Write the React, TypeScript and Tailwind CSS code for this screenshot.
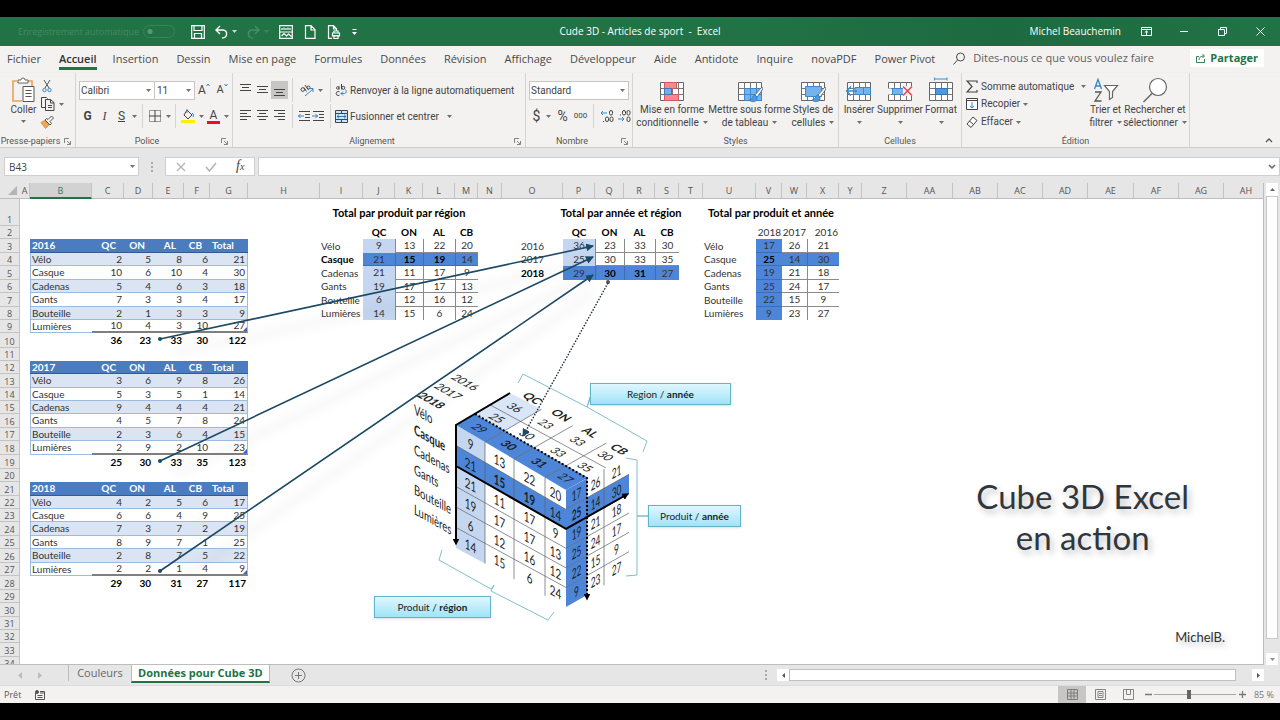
import React from 'react';

type Cell = { text?: string | number; cls?: string; span?: number; corner?: boolean };
type Pt = [number, number];

const COLUMNS: [string, number][] = [
    ['A', 10], ['B', 62], ['C', 32], ['D', 29], ['E', 31], ['F', 26], ['G', 38], ['H', 72], ['I', 43],
    ['J', 32], ['K', 28], ['L', 32], ['M', 23], ['N', 24], ['O', 61], ['P', 32], ['Q', 29], ['R', 31],
    ['S', 24], ['T', 24], ['U', 53], ['V', 26], ['W', 25], ['X', 32], ['Y', 23], ['Z', 45], ['AA', 46],
    ['AB', 45], ['AC', 45], ['AD', 45], ['AE', 46], ['AF', 45], ['AG', 45], ['AH', 0],
];

const ROWS = [
    27, 13, 14, 13, 14, 13, 14, 13, 13, 15, 13, 13, 14, 13, 13, 14, 13, 14, 14, 13, 14, 13, 13, 14, 13, 14,
    13, 14, 13, 14, 13, 13, 14, 13,
];

const PRODUCTS = ['Vélo', 'Casque', 'Cadenas', 'Gants', 'Bouteille', 'Lumières'];
const REGIONS = ['QC', 'ON', 'AL', 'CB'];

const YEARS = [
    {
        year: '2016',
        row: 3,
        data: [[2, 5, 8, 6, 21], [10, 6, 10, 4, 30], [5, 4, 6, 3, 18], [7, 3, 3, 4, 17], [2, 1, 3, 3, 9], [10, 4, 3, 10, 27]],
        total: [36, 23, 33, 30, 122],
    },
    {
        year: '2017',
        row: 12,
        data: [[3, 6, 9, 8, 26], [5, 3, 5, 1, 14], [9, 4, 4, 4, 21], [4, 5, 7, 8, 24], [2, 3, 6, 4, 15], [2, 9, 2, 10, 23]],
        total: [25, 30, 33, 35, 123],
    },
    {
        year: '2018',
        row: 21,
        data: [[4, 2, 5, 6, 17], [6, 6, 4, 9, 25], [7, 3, 7, 2, 19], [8, 9, 7, 1, 25], [2, 8, 7, 5, 22], [2, 2, 1, 4, 9]],
        total: [29, 30, 31, 27, 117],
    },
];

const BY_REGION = [[9, 13, 22, 20], [21, 15, 19, 14], [21, 11, 17, 9], [19, 17, 17, 13], [6, 12, 16, 12], [14, 15, 6, 24]];
const BY_YEAR_REGION = [[36, 23, 33, 30], [25, 30, 33, 35], [29, 30, 31, 27]];
const BY_YEAR = [[17, 26, 21], [25, 14, 30], [19, 21, 18], [25, 24, 17], [22, 15, 9], [9, 23, 27]];

function buildCells() {
    const cells: Record<string, Cell> = {};
    const title = 'text-center font-bold text-black';

    YEARS.forEach(({ year, row, data, total }) => {
        const head = 'bg-[#4a7cbf] text-white font-bold border-b border-[#2f5c96] ';
        cells['B' + row] = { text: year, cls: head + 'pl-0.5 text-left' };
        ['C', 'D', 'E', 'F'].forEach((c, i) => {
            cells[c + row] = { text: REGIONS[i], cls: head + 'pr-2 text-right' };
        });
        cells['G' + row] = { text: 'Total', cls: head + 'pl-0.5 text-left' };
        data.forEach((values, i) => {
            const r = row + 1 + i;
            const last = i === data.length - 1;
            const band = i % 2 === 0 ? 'bg-[#dae4f2] ' : '';
            cells['B' + r] = { text: PRODUCTS[i], cls: band + 'pl-px text-left border-b border-l border-[#9dbbe0]' };
            values.forEach((v, j) => {
                cells['CDEFG'[j] + r] = {
                    text: v,
                    cls:
                        band +
                        'pr-0.5 text-right ' +
                        (last ? 'border-b-2 border-b-[#7f7f7f] ' : 'border-b border-b-[#9dbbe0] ') +
                        (j === 4 ? 'border-r border-r-[#9dbbe0]' : ''),
                    corner: last && j === 4,
                };
            });
        });
        total.forEach((v, j) => {
            cells['CDEFG'[j] + (row + 7)] = { text: v, cls: 'pr-0.5 text-right font-bold text-black' };
        });
    });

    cells.I1 = { text: 'Total par produit par région', span: 5, cls: title + ' text-[11px]' };
    cells.P1 = { text: 'Total par année et région', span: 4, cls: title + ' text-[11px]' };
    cells.U1 = { text: 'Total par produit et année', span: 4, cls: title + ' text-[11px]' };

    REGIONS.forEach((region, i) => {
        cells['JKLM'[i] + 2] = { text: region, cls: title };
        cells['PQRS'[i] + 2] = { text: region, cls: title };
    });
    ['2018', '2017', '2016'].forEach((y, i) => {
        cells['VWX'[i] + 2] = { text: y, cls: 'text-right pr-px' };
    });

    BY_REGION.forEach((values, i) => {
        const r = i + 3;
        const hit = i === 1;
        const line = i < 5 ? 'border-b ' : '';
        cells['I' + r] = { text: PRODUCTS[i], cls: 'pl-px text-left ' + (hit ? 'font-bold text-black' : '') };
        values.forEach((v, j) => {
            const fill = hit ? 'bg-[#4d86d8] border-[#3c6db5] ' : j === 0 ? 'bg-[#c5d7f0] border-[#c5d7f0] ' : 'border-[#8a8a8a] ';
            cells['JKLM'[j] + r] = {
                text: v,
                cls: fill + line + 'text-center ' + (j ? 'border-l ' : '') + (hit && (j === 1 || j === 2) ? 'font-bold text-black' : ''),
            };
        });
    });

    BY_YEAR_REGION.forEach((values, i) => {
        const r = i + 3;
        const hit = i === 2;
        cells['O' + r] = { text: 2016 + i, cls: 'text-center ' + (hit ? 'font-bold text-black' : '') };
        values.forEach((v, j) => {
            const fill = hit ? 'bg-[#4d86d8] border-[#3c6db5] ' : j === 0 ? 'bg-[#c5d7f0] border-b border-[#c5d7f0] ' : 'border-b border-[#8a8a8a] ';
            cells['PQRS'[j] + r] = {
                text: v,
                cls: fill + 'text-center ' + (j ? 'border-l ' : '') + (hit && (j === 1 || j === 2) ? 'font-bold text-black' : ''),
            };
        });
    });

    BY_YEAR.forEach((values, i) => {
        const r = i + 3;
        const line = i < 5 ? 'border-b ' : '';
        cells['U' + r] = { text: PRODUCTS[i], cls: 'pl-px text-left' };
        values.forEach((v, j) => {
            const fill = i === 1 || j === 0 ? 'bg-[#4d86d8] border-[#3c6db5] ' : 'border-[#8a8a8a] ';
            cells['VWX'[j] + r] = {
                text: v,
                cls: fill + line + 'text-center ' + (j === 2 ? 'border-l ' : '') + (i === 1 && j === 0 ? 'font-bold text-black' : ''),
            };
        });
    });
    return cells;
}

const CELLS = buildCells();

const TABS = [
    'Fichier', 'Accueil', 'Insertion', 'Dessin', 'Mise en page', 'Formules', 'Données', 'Révision', 'Affichage',
    'Développeur', 'Aide', 'Antidote', 'Inquire', 'novaPDF', 'Power Pivot',
];

/* ---------- icons ---------- */

const Svg: React.FC<{ w: number; h: number; children: React.ReactNode }> = ({ w, h, children }) => (
    <svg width={w} height={h} viewBox={`0 0 ${w} ${h}`} fill="none" stroke="currentColor" className="shrink-0" aria-hidden="true">
        {children}
    </svg>
);

const Caret = () => (
    <svg viewBox="0 0 5 3" className="h-[3px] w-[5px] shrink-0 opacity-75" aria-hidden="true">
        <path d="M0 0h5L2.500 3z" fill="currentColor" />
    </svg>
);

const Launcher = () => (
    <button aria-label="Options" className="absolute right-1 bottom-[2px] text-[#666]">
        <Svg w={7} h={7}>
            <path d="M.5 5V.5H5M3 3l3 3M6.500 3v3.500H3" strokeWidth=".8" />
        </Svg>
    </button>
);

const Lines: React.FC<{ rows: [number, number, number][] }> = ({ rows }) => (
    <Svg w={13} h={14}>
        {rows.map(([x, y, w]) => (
            <path key={y} d={`M${x} ${y}.5h${w}`} strokeWidth="1" />
        ))}
    </Svg>
);

const PasteIcon = () => (
    <Svg w={25} h={26}>
        <path d="M6 4H2v20h9M17 4h4v5" stroke="#e8a25a" strokeWidth="1.6" />
        <path d="M7 6V3h3a2 2 0 0 1 4 0h3v3z" fill="#fff" stroke="#666" />
        <path d="M12 9.500h11v15H12z" fill="#fff" stroke="#555" />
        <path d="M14.500 13.500h6M14.500 16.500h6M14.500 19.500h6" stroke="#555" />
    </Svg>
);

const CutIcon = () => (
    <Svg w={10} h={14}>
        <path d="M2 1l5 8M8 1L3 9" stroke="#555" />
        <circle cx="2.500" cy="11" r="1.700" stroke="#3b83c5" />
        <circle cx="7.500" cy="11" r="1.700" stroke="#3b83c5" />
    </Svg>
);

const CopyIcon = () => (
    <Svg w={14} h={14}>
        <path d="M4 10.500H.5V.5h5l1 1" />
        <path d="M4.500 2.500h5l3.500 3v8H4.500zM9.500 2.500v3.500H13M7 8.500h4M7 10.500h4" fill="#f3f2f1" />
    </Svg>
);

const BrushIcon = () => (
    <Svg w={14} h={14}>
        <path d="M1 7.500l3.500-2 4.500 4.500-3.500 3.500z" fill="#eda85e" stroke="#e0953f" />
        <path d="M5 5l5 5 1.500-1.500-1.500-2L13.500 3 11.500 1 8 4.500 6.500 3.500z" fill="#f3f2f1" stroke="#555" />
    </Svg>
);

const BordersIcon = () => (
    <Svg w={14} h={14}>
        <path d="M1.500 1.500h11v11h-11z" strokeDasharray="1 1" />
        <path d="M7 1v12M1 7h12" />
    </Svg>
);

const FillIcon = () => (
    <Svg w={14} h={16}>
        <path d="M6 2l5 5-4 4-4-4z" />
        <path d="M6 5V1M11 5c2 1 1.500 3 1 4" stroke="#3b83c5" />
        <path d="M0 12h14v3H0z" fill="#ffee00" stroke="none" />
    </Svg>
);

const GridBase: React.FC<{ children?: React.ReactNode }> = ({ children }) => (
    <Svg w={26} h={26}>
        <path d="M1.500 5.500h23v18h-23z" fill="#fff" stroke="#666" />
        <path d="M1.500 11.500h23M1.500 17.500h23M7.500 5.500v18M13.500 5.500v18M19.500 5.500v18" stroke="#777" />
        {children}
    </Svg>
);

const Brush = () => (
    <>
        <path d="M25 10l-7 8 2 2 6-8z" fill="#fff" stroke="#555" strokeWidth=".8" />
        <path d="M18 18c-3 0-2 5-6 5 3 3 9 2 8-3z" fill="#4b9ae0" stroke="#2f77ba" strokeWidth=".8" />
    </>
);

const CondIcon = () => (
    <GridBase>
        <path d="M5.500 5.500h12v6h-12zM5.500 17.500h14v6h-14z" fill="#f58a8e" stroke="#d4585d" />
        <path d="M5.500 11.500h7v6h-7z" fill="#76aee8" stroke="#3d79b8" />
    </GridBase>
);

const TableStyleIcon = () => (
    <GridBase>
        <path d="M7.500 11.500h17v12h-17z" fill="#76b3ec" stroke="#3d87cc" />
        <path d="M13.500 11v12M19.500 11v12M8 17.500h17" stroke="#3d87cc" />
        <Brush />
    </GridBase>
);

const CellStyleIcon = () => (
    <GridBase>
        <path d="M5.500 9.500h16v10h-16z" fill="#76b3ec" stroke="#3d87cc" />
        <Brush />
    </GridBase>
);

const InsertIcon = () => (
    <GridBase>
        <path d="M9 10.500h15.500v7H9z" fill="#76b3ec" stroke="#3d87cc" />
        <path d="M17.500 11v6" stroke="#3d87cc" />
        <path d="M0 14h11M5 9.500L.5 14 5 18.500" stroke="#2f8ad8" strokeWidth="1.500" />
    </GridBase>
);

const DeleteIcon = () => (
    <GridBase>
        <path d="M0 11.500h4v6H0z" fill="#f3f2f1" stroke="none" />
        <path d="M5.500 11.500h12v6h-12z" fill="#76b3ec" stroke="#3d87cc" />
        <path d="M16 9h10v10H16z" fill="#f3f2f1" stroke="none" />
        <path d="M16 9.500l9 9M25 9.500l-9 9" stroke="#e8484c" strokeWidth="1.500" />
    </GridBase>
);

const FormatIcon = () => (
    <GridBase>
        <path d="M7.500 11.500h12v6h-12z" fill="#4b9ae0" stroke="#2f77ba" />
        <path d="M6 2h13M6.500 .5v3M19 .5v3" stroke="#3b8fd0" />
    </GridBase>
);

const SortIcon = () => (
    <Svg w={26} h={26}>
        <path d="M1.500 12L5 2.500 8.500 12M2.800 9h4.400" stroke="#3b83c5" strokeWidth="1.300" />
        <path d="M2 15h6l-6 9h6.500" stroke="#555" strokeWidth="1.300" />
        <path d="M11.500 8.500h13l-5 6v6l-3 2v-8z" fill="#fff" stroke="#666" strokeWidth="1.200" />
    </Svg>
);

const FindIcon = () => (
    <Svg w={26} h={26}>
        <circle cx="16" cy="10" r="8.500" fill="#fff" stroke="#666" strokeWidth="1.200" />
        <path d="M10 16.500L1.500 25" stroke="#666" strokeWidth="1.400" />
    </Svg>
);

/* ---------- ribbon ---------- */

const Group: React.FC<{ label: string; width: string; launcher?: boolean; children: React.ReactNode }> = ({ label, width, launcher, children }) => (
    <section className={`relative flex shrink-0 flex-col border-r border-[#d6d4d2] pt-1 ${width}`}>
        <div className="h-[59px]">{children}</div>
        <div className={`text-center text-[9px] leading-3 text-[#555] ${launcher ? 'pr-3.5' : ''}`}>{label}</div>
        {launcher && <Launcher />}
    </section>
);

const Small: React.FC<{ label: string; width?: string; children: React.ReactNode }> = ({ label, width = 'w-[17px]', children }) => (
    <button aria-label={label} className={`flex h-[18px] items-center justify-center gap-1 ${width}`}>
        {children}
    </button>
);

const Sep = () => <span className="mx-1 h-6 w-px bg-[#d6d4d2]" />;

const Big: React.FC<{ lines: string[]; width: string; icon: React.ReactNode }> = ({ lines, width, icon }) => (
    <button className={`flex shrink-0 flex-col items-center leading-[13px] whitespace-nowrap ${width}`}>
        {icon}
        <span>{lines[0]}</span>
        <span className="flex h-[13px] items-center gap-1">
            {lines[1]}
            <Caret />
        </span>
    </button>
);

const Ribbon = () => (
    <div className="flex h-[75px] overflow-hidden border-b border-[#cfcdcb] bg-[#f3f2f1] font-['Roboto','Open_Sans',sans-serif] text-[10px] text-[#444] shadow-sm">
        <Group label="Presse-papiers" width="w-[76px]" launcher>
            <div className="flex justify-center gap-1">
                <button className="flex flex-col items-center leading-[13px]">
                    <PasteIcon />
                    Coller
                    <span className="pt-1"><Caret /></span>
                </button>
                <div className="flex flex-col">
                    <Small label="Couper" width="w-[14px]"><CutIcon /></Small>
                    <Small label="Copier" width="w-[24px]"><CopyIcon /><Caret /></Small>
                    <Small label="Reproduire la mise en forme" width="w-[14px]"><BrushIcon /></Small>
                </div>
            </div>
        </Group>

        <Group label="Police" width="w-[157px]" launcher>
            <div className="flex h-[26px] items-center pl-[3px]">
                <span className="relative flex items-center">
                    <select aria-label="Police" className="h-[19px] w-[76px] appearance-none border border-[#c8c6c4] bg-white pl-px">
                        <option>Calibri</option>
                    </select>
                    <span className="pointer-events-none absolute right-1"><Caret /></span>
                </span>
                <span className="relative flex items-center">
                    <select aria-label="Taille" className="h-[19px] w-10 appearance-none border border-l-0 border-[#c8c6c4] bg-white pl-0.5">
                        <option>11</option>
                    </select>
                    <span className="pointer-events-none absolute right-1"><Caret /></span>
                </span>
                <button className="flex w-[18px] items-start justify-center text-[12px] leading-[14px]">
                    A<Svg w={4} h={4}><path d="M.5 3L2 1l1.500 2" stroke="#3b83c5" /></Svg>
                </button>
                <button className="flex w-[18px] items-start justify-center text-[11px] leading-[14px]">
                    A<Svg w={4} h={4}><path d="M.5 1L2 3l1.500-2" stroke="#3b83c5" /></Svg>
                </button>
            </div>
            <div className="flex h-[26px] items-center pl-[3px] text-[12px]">
                <button className="w-[17px] font-bold">G</button>
                <button className="w-[17px] font-['Liberation_Serif'] italic">I</button>
                <button className="w-[17px] underline">S</button>
                <Small label="Soulignement" width="w-[8px]"><Caret /></Small>
                <Sep />
                <Small label="Bordures" width="w-[24px]"><BordersIcon /><Caret /></Small>
                <Sep />
                <Small label="Couleur de remplissage" width="w-[25px]"><FillIcon /><Caret /></Small>
                <button className="flex w-[26px] items-center justify-center gap-1">
                    <span className="w-[13px] border-b-3 border-[#e81123] leading-3">A</span>
                    <Caret />
                </button>
            </div>
        </Group>

        <Group label="Alignement" width="w-[293px]" launcher>
            <div className="flex h-[26px] items-center pl-1">
                <Small label="Haut"><Lines rows={[[1, 1, 11], [3, 4, 7], [1, 7, 11]]} /></Small>
                <Small label="Milieu"><Lines rows={[[1, 3, 11], [3, 6, 7], [1, 9, 11]]} /></Small>
                <span className="bg-[#c8c6c4]"><Small label="Bas"><Lines rows={[[1, 6, 11], [3, 9, 7], [1, 12, 11]]} /></Small></span>
                <Sep />
                <Small label="Orientation" width="w-[29px]">
                    <Svg w={14} h={13}>
                        <circle cx="2.800" cy="5.500" r="1.800" />
                        <path d="M4 3.500l2.500 4M5 1l3.500 5" />
                        <circle cx="8.500" cy="3.500" r="1.500" />
                        <path d="M5 12l8-7M9.500 4.500H13V8" stroke="#3b83c5" />
                    </Svg>
                    <Caret />
                </Small>
                <Sep />
                <button className="flex items-center gap-0.5 whitespace-nowrap">
                    <Svg w={13} h={14}>
                        <path d="M4 3v3.500M4 5a1.300 1.300 0 1 1 0-.1M6.500 1v5.500" />
                        <circle cx="8.300" cy="4.800" r="1.500" />
                        <path d="M4.500 9a2 2 0 1 0 0 3" />
                        <path d="M10.500 6.500c1.500 1.500.5 4-1 4H6M8 8.500L6 10.500l2 2" stroke="#3b83c5" />
                    </Svg>
                    Renvoyer à la ligne automatiquement
                </button>
            </div>
            <div className="flex h-[26px] items-center pl-1">
                <Small label="Gauche"><Lines rows={[[1, 1, 11], [1, 4, 7], [1, 7, 11], [1, 10, 7]]} /></Small>
                <Small label="Centre"><Lines rows={[[1, 1, 11], [3, 4, 7], [1, 7, 11], [3, 10, 7]]} /></Small>
                <Small label="Droite"><Lines rows={[[1, 1, 11], [5, 4, 7], [1, 7, 11], [5, 10, 7]]} /></Small>
                <Sep />
                <Small label="Diminuer le retrait" width="w-[14px]">
                    <Svg w={13} h={12}>
                        <path d="M1 1.500h11M7 4.500h5M7 7.500h5M1 10.500h11" />
                        <path d="M0 6h6M2.500 4L.5 6l2 2" stroke="#3b83c5" />
                    </Svg>
                </Small>
                <Small label="Augmenter le retrait" width="w-[15px]">
                    <Svg w={13} h={12}>
                        <path d="M1 1.500h11M7 4.500h5M7 7.500h5M1 10.500h11" />
                        <path d="M0 6h6M3.500 4l2 2-2 2" stroke="#3b83c5" />
                    </Svg>
                </Small>
                <Sep />
                <button className="flex items-center gap-0.5 whitespace-nowrap">
                    <Svg w={13} h={13}>
                        <path d="M.5 .5h12v12H.5z" fill="#cfe4f7" />
                        <path d="M1 3.500h11M1 9.500h11M6.500 1v2.500M6.500 10v2.500" />
                        <path d="M2 6.500h9M4 4.700L2 6.500l2 1.800M9 4.700l2 1.800-2 1.800" stroke="#2f77ba" />
                    </Svg>
                    Fusionner et centrer
                    <span className="pl-1.5"><Caret /></span>
                </button>
            </div>
        </Group>

        <Group label="Nombre" width="w-[107px]" launcher>
            <div className="flex h-[26px] items-center px-[3px]">
                <span className="relative flex w-full items-center">
                    <select aria-label="Format de nombre" className="h-[19px] w-full appearance-none border border-[#c8c6c4] bg-white pl-px">
                        <option>Standard</option>
                    </select>
                    <span className="pointer-events-none absolute right-1"><Caret /></span>
                </span>
            </div>
            <div className="flex h-[26px] items-center pl-1">
                <button className="flex w-[24px] items-center justify-center gap-1.5 text-[14px]">$<Caret /></button>
                <button className="w-[18px] text-[14px]">%</button>
                <button className="w-[18px] text-center text-[8px]">000</button>
                <Sep />
                <Small label="Ajouter une décimale">
                    <Svg w={14} h={14}>
                        <path d="M1 4h6M3 2L1 4l2 2" stroke="#2f8ad8" />
                        <rect x="9.500" y="1.500" width="3" height="4.500" rx="1.500" />
                        <rect x="5.500" y="8" width="3" height="4.500" rx="1.500" />
                        <rect x="10" y="8" width="3" height="4.500" rx="1.500" />
                        <path d="M3 12.500h1" />
                    </Svg>
                </Small>
                <Small label="Réduire les décimales">
                    <Svg w={14} h={14}>
                        <path d="M1 10h6M5 8l2 2-2 2" stroke="#2f8ad8" />
                        <rect x="5.500" y="1.500" width="3" height="4.500" rx="1.500" />
                        <rect x="10" y="1.500" width="3" height="4.500" rx="1.500" />
                        <rect x="10" y="8" width="3" height="4.500" rx="1.500" />
                        <path d="M3 6h1" />
                    </Svg>
                </Small>
            </div>
        </Group>

        <Group label="Styles" width="w-[206px]">
            <div className="flex justify-between px-1">
                <Big lines={['Mise en forme', 'conditionnelle']} width="w-[70px]" icon={<CondIcon />} />
                <Big lines={['Mettre sous forme', 'de tableau']} width="w-[82px]" icon={<TableStyleIcon />} />
                <Big lines={['Styles de', 'cellules']} width="w-[42px]" icon={<CellStyleIcon />} />
            </div>
        </Group>

        <Group label="Cellules" width="w-[123px]">
            <div className="flex justify-between px-1">
                <Big lines={['Insérer', '']} width="w-[32px]" icon={<InsertIcon />} />
                <Big lines={['Supprimer', '']} width="w-[48px]" icon={<DeleteIcon />} />
                <Big lines={['Format', '']} width="w-[32px]" icon={<FormatIcon />} />
            </div>
        </Group>

        <Group label="Édition" width="w-[228px]">
            <div className="flex pl-1">
                <div className="flex w-[122px] shrink-0 flex-col whitespace-nowrap">
                    <button className="flex h-[18px] items-center gap-[3px] pt-px leading-3">
                        <Svg w={12} h={13}><path d="M11 3V1H1l5 5.500L1 12h10v-2" strokeWidth="1.200" /></Svg>
                        Somme automatique
                        <span className="pl-1"><Caret /></span>
                    </button>
                    <button className="flex h-[18px] items-center gap-[3px] leading-3">
                        <Svg w={12} h={12}>
                            <path d="M.5 .5h11v11H.5zM.5 2.500h11" fill="#fff" />
                            <path d="M6 4v6M4 8l2 2 2-2" stroke="#2f8ad8" />
                        </Svg>
                        Recopier
                        <Caret />
                    </button>
                    <button className="flex h-[18px] items-center gap-[3px] leading-3">
                        <Svg w={12} h={12}><path d="M1 8l6-7 4 3.500-6 7zM3.500 5l4 3.500" fill="#fff" /></Svg>
                        Effacer
                        <Caret />
                    </button>
                </div>
                <Big lines={['Trier et', 'filtrer']} width="w-[35px]" icon={<SortIcon />} />
                <Big lines={['Rechercher et', 'sélectionner']} width="w-[64px]" icon={<FindIcon />} />
            </div>
        </Group>

        <div className="relative flex-1">
            <button aria-label="Réduire le ruban" className="absolute right-[7px] bottom-1 text-[#555]">
                <Svg w={8} h={5}><path d="M1 4l3-3 3 3" strokeWidth="1.300" /></Svg>
            </button>
        </div>
    </div>
);

const TitleBar = () => (
    <header className="grid h-[29px] grid-cols-[1fr_auto_1fr] items-center bg-[#217346] text-[10px] text-white">
        <div className="flex items-center pl-[18px]">
            <label className="flex items-center gap-1 text-[9px] text-[#45895f]">
                Enregistrement automatique
                <input
                    type="checkbox"
                    role="switch"
                    className="h-[13px] w-8 appearance-none rounded-full border border-[#3d8359] bg-[radial-gradient(circle_at_6px_50%,#5b9873_2px,transparent_3px)]"
                />
            </label>
            <div className="flex items-center gap-2.5 pl-4">
                <button aria-label="Enregistrer">
                    <Svg w={14} h={14}><path d="M.7 .7h12.600v12.600H.7zM3 1v4.500h8V1M3.500 13V8.500h7V13" strokeWidth="1.200" /></Svg>
                </button>
                <button aria-label="Annuler" className="flex items-center gap-1">
                    <Svg w={13} h={14}><path d="M5 1L1 5l4 4M1 5h7c5 0 5 8-1 8" strokeWidth="1.400" /></Svg>
                    <Caret />
                </button>
                <button aria-label="Rétablir" className="flex items-center gap-1 text-[#4b8d66]">
                    <Svg w={13} h={14}><path d="M8 1l4 4-4 4M12 5H5c-5 0-5 8 1 8" strokeWidth="1.400" /></Svg>
                    <Caret />
                </button>
                <button aria-label="Image">
                    <Svg w={14} h={14}>
                        <path d="M.7 .7h12.600v12.600H.7zM1 7h12M3 5V3M5 5V2.500M7 3v2M9 2.500V5M11 3v2M2.500 11l2.500-2.500L7.500 11l2-2 3 2.500" strokeWidth="1.200" />
                    </Svg>
                </button>
                <button aria-label="Nouveau">
                    <Svg w={14} h={14}><path d="M2.500 .7h5.500l4 4v8.600H2.500zM8 1v4h4" strokeWidth="1.200" /></Svg>
                </button>
                <button aria-label="Aperçu">
                    <Svg w={14} h={14}><path d="M5 13.300H1.500V.7h5l3 3V6M6.500 1v3h3M5.500 11V8h7v3zM7 8V6h4v2M7 10.500h4v3H7z" strokeWidth="1.200" /></Svg>
                </button>
                <button aria-label="Personnaliser">
                    <Svg w={7} h={8}><path d="M1.500 1.500h4" /><path d="M1 4h5L3.500 7z" fill="currentColor" stroke="none" /></Svg>
                </button>
            </div>
        </div>
        <h1 className="whitespace-pre">Cude 3D - Articles de sport  -  Excel</h1>
        <div className="flex h-full items-center justify-end bg-linear-to-r from-[#217346] via-[#1e6a40] to-[#217346] pr-[15px]">
            <span className="pr-5">Michel Beauchemin</span>
            <button aria-label="Options du ruban" className="pr-7">
                <Svg w={11} h={9}><path d="M.5 .5h10v8H.5zM.5 2.500h10M5.500 8V4M3.800 5.500L5.500 4l1.700 1.500" /></Svg>
            </button>
            <button aria-label="Réduire" className="pr-[30px]"><Svg w={8} h={9}><path d="M0 4.500h8" /></Svg></button>
            <button aria-label="Restaurer" className="pr-[29px]">
                <Svg w={9} h={9}><path d="M.5 2.500h6v6h-6zM2.500 2.500v-2h6v6h-2" /></Svg>
            </button>
            <button aria-label="Fermer"><Svg w={9} h={9}><path d="M.5 .5l8 8M8.500 .5l-8 8" /></Svg></button>
        </div>
    </header>
);

const TabStrip = () => (
    <nav className="flex h-[27px] items-center gap-[18px] bg-[#f3f2f1] pr-4 pb-[3px] pl-[7px] text-[11px] whitespace-nowrap text-[#4a4a4a]">
        {TABS.map((tab) => (
            <button
                key={tab}
                className={tab === 'Accueil' ? '-mr-0.5 mt-[3px] border-b-3 border-[#217346] leading-[17px] font-semibold text-[#333]' : 'leading-[17px]'}
            >
                {tab}
            </button>
        ))}
        <label className="flex flex-1 items-center gap-2">
            <Svg w={12} h={13}><circle cx="7.500" cy="5" r="4" /><path d="M4.500 8L.5 12.500" /></Svg>
            <input placeholder="Dites-nous ce que vous voulez faire" className="w-full bg-transparent outline-none placeholder:text-[#605e5c]" />
        </label>
        <button className="flex h-[18px] items-center gap-1 bg-white px-1.5 font-bold text-[#217346]">
            <Svg w={10} h={10}><path d="M3 3.500H.5v6h8V6M3 7c0-3 2-4 5-4M6.500 1l2 2-2 2" strokeWidth=".9" /></Svg>
            Partager
        </button>
    </nav>
);

const FormulaBar = () => (
    <div className="flex h-[35px] items-center bg-[#e6e6e6] pt-0.5 pl-1 text-[10px] text-[#444]">
        <label className="relative flex items-center">
            <input aria-label="Zone Nom" defaultValue="B43" className="h-[19px] w-[135px] border border-[#cfcfcf] bg-white pl-1" />
            <span className="absolute right-1"><Caret /></span>
        </label>
        <span className="flex w-[26px] flex-col items-center gap-0.5">
            <i className="size-0.5 bg-[#aaa]" />
            <i className="size-0.5 bg-[#aaa]" />
            <i className="size-0.5 bg-[#aaa]" />
        </span>
        <div className="flex h-[19px] w-[90px] items-center justify-around border border-[#cfcfcf] bg-white">
            <button aria-label="Annuler la saisie" className="text-[#b5b5b5]"><Svg w={10} h={10}><path d="M1 1l8 8M9 1L1 9" strokeWidth="1.300" /></Svg></button>
            <button aria-label="Valider" className="text-[#b5b5b5]"><Svg w={12} h={10}><path d="M1 5l3.500 4L11 1" strokeWidth="1.600" /></Svg></button>
            <button className="font-['Liberation_Serif'] text-[14px] leading-4 italic">
                f<span className="text-[10px]">x</span>
            </button>
        </div>
        <label className="relative ml-[3px] flex flex-1 items-center">
            <input aria-label="Formule" className="h-[19px] w-full border border-[#cfcfcf] bg-white pl-1" />
            <span className="absolute right-1 text-[#666]">
                <Svg w={8} h={6}><path d="M1 1l3 3 3-3" strokeWidth="1.500" /></Svg>
            </span>
        </label>
    </div>
);

/* ---------- cube ---------- */

const lerp = (a: number, b: number, t: number) => a + (b - a) * t;
const path = (...pts: Pt[]) => pts.map((p) => p.map((n) => n.toFixed(1)).join(',')).join(' ');

const FRONT_X = [456, 485, 514, 545, 566];
const SIDE_X = [566, 587, 604, 629];
const DEPTH = [0, 0.35, 0.63, 1];

const front = (i: number, v: number): Pt => {
    const dx = lerp(FRONT_X[Math.floor(i)], FRONT_X[Math.ceil(i)], i % 1) - 456;
    return [456 + dx, lerp(425 + dx * 0.59, 548 + dx * 0.536, v / 6)];
};
const side = (i: number, v: number): Pt => {
    const dx = lerp(SIDE_X[Math.floor(i)], SIDE_X[Math.ceil(i)], i % 1) - 566;
    return [566 + dx, lerp(490 - dx * 0.556, 607 - dx * 0.571, v / 6)];
};
const top = (i: number, v: number): Pt => {
    const depth = lerp(DEPTH[Math.floor(v)], DEPTH[Math.ceil(v)], v % 1);
    const [x, y] = front(i, 0);
    const t = (x - 456) / 110;
    return [x + depth * lerp(54, 63, t), y - depth * lerp(32, 35, t)];
};

type Face = (i: number, v: number) => Pt;
const tile = (f: Face, i: number, v: number) => path(f(i, v), f(i + 1, v), f(i + 1, v + 1), f(i, v + 1));

const FRONT_M = 'matrix(.7 .39 0 1';
const SIDE_M = 'matrix(.6 -.34 0 1';
const TOP_M = 'matrix(.78 .44 -.78 .46';

const Label: React.FC<{ at: Pt; m: string; bold?: boolean; anchor?: 'start' | 'middle'; children: React.ReactNode }> = ({ at, m, bold, anchor = 'middle', children }) => (
    <text transform={`${m} ${at[0]} ${at[1]})`} textAnchor={anchor} dominantBaseline="central" fontWeight={bold ? 700 : 400}>
        {children}
    </text>
);

const Cube = () => (
    <g>
        {[0, 1, 2, 3, 4, 5].map((r) =>
            [0, 1, 2, 3].map((c) => (
                <polygon key={`f${r}${c}`} points={tile(front, c, r)} fill={r === 1 ? '#4d86d8' : c === 0 ? '#c5d7f0' : '#fff'} />
            )),
        )}
        {[0, 1, 2, 3, 4, 5].map((r) =>
            [0, 1, 2].map((c) => (
                <polygon key={`s${r}${c}`} points={tile(side, c, r)} fill={r === 1 || c === 0 ? '#4d86d8' : '#fff'} />
            )),
        )}
        {[0, 1, 2].map((r) =>
            [0, 1, 2, 3].map((c) => (
                <polygon key={`t${r}${c}`} points={tile(top, c, r)} fill={r === 0 ? '#4d86d8' : c === 0 ? '#d9e6f8' : '#fff'} />
            )),
        )}
        <g stroke="#5a5f66" strokeWidth=".7" fill="none">
            {[1, 2, 3].map((c) => <polyline key={c} points={path(front(c, 6), front(c, 0), top(c, 3))} />)}
            {[1, 2, 3, 4, 5].map((r) => <polyline key={r} points={path(front(0, r), front(4, r), side(3, r))} />)}
            {[1, 2].map((c) => <polyline key={c} points={path(side(c, 0), side(c, 6))} />)}
            <polyline points={path(top(0, 2), top(4, 2))} />
        </g>
        <g fontSize="14" fill="#1b1f26">
            {BY_REGION.map((row, r) =>
                row.map((v, c) => (
                    <Label key={`${r}${c}`} at={front(c + 0.5, r + 0.5)} m={FRONT_M} bold={r === 1 && (c === 1 || c === 2)}>{v}</Label>
                )),
            )}
            {BY_YEAR.map((row, r) =>
                row.map((v, c) => (
                    <Label key={`${r}${c}`} at={side(c + 0.5, r + 0.5)} m={SIDE_M} bold={r === 1 && c === 0}>{v}</Label>
                )),
            )}
            {PRODUCTS.map((name, r) => (
                <Label key={name} at={[414, 409 + r * 20]} m="matrix(.68 .38 0 1" bold={r === 1} anchor="start">{name}</Label>
            ))}
        </g>
        <g fontSize="13" fill="#1b1f26">
            {BY_YEAR_REGION.map((row, r) =>
                row.map((v, c) => (
                    <Label key={`${r}${c}`} at={top(c + 0.5, 2.5 - r)} m={TOP_M} bold={r === 2 && (c === 1 || c === 2)}>{v}</Label>
                )),
            )}
            {REGIONS.map((name, i) => (
                <Label key={name} at={[533 + i * 29, 398 + i * 17]} m={TOP_M} bold>{name}</Label>
            ))}
            {['2016', '2017', '2018'].map((y, i) => (
                <Label key={y} at={[466 - i * 17, 382 + i * 9]} m={TOP_M} bold={i === 2}>{y}</Label>
            ))}
        </g>
        <g stroke="#000" fill="none" strokeWidth="2">
            <path d="M510 393L456 425v117" markerEnd="url(#black)" />
            <polyline points={path(front(0, 2), front(4, 2), [626, 495])} markerEnd="url(#black)" />
            <path d="M475 414L587 478v119" strokeDasharray="2 2" markerEnd="url(#black)" />
        </g>
    </g>
);

const ARROWS: [Pt, Pt][] = [
    [[160, 339], [593, 246]],
    [[160, 461], [593, 257]],
    [[160, 571], [593, 275]],
];

const Overlay = () => (
    <svg className="pointer-events-none absolute top-0 left-0 h-[482px] w-[800px]" viewBox="0 183 800 482" role="img" aria-label="Cube 3D">
        <defs>
            <marker id="teal" viewBox="0 0 8 8" refX="7" refY="4" markerWidth="8" markerHeight="8" markerUnits="userSpaceOnUse" orient="auto">
                <path d="M0 0l8 4-8 4z" fill="#1c4964" />
            </marker>
            <marker id="black" viewBox="0 0 6 6" refX="3" refY="3" markerWidth="7" markerHeight="7" markerUnits="userSpaceOnUse" orient="auto">
                <path d="M0 0l6 3-6 3z" fill="#000" />
            </marker>
            <filter id="soft" x="-10%" y="-10%" width="120%" height="120%">
                <feGaussianBlur stdDeviation="6" />
            </filter>
        </defs>
        <g stroke="#000" strokeWidth="8" opacity=".035" filter="url(#soft)">
            {ARROWS.map(([a, b], i) => <line key={i} x1={a[0] + 14} y1={a[1] + 14} x2={b[0]} y2={b[1] + 18} />)}
        </g>
        <Cube />
        <g stroke="#1c4964" strokeWidth="1.6">
            {ARROWS.map(([a, b], i) => (
                <g key={i}>
                    <circle cx={a[0]} cy={a[1]} r="2" fill="#1c4964" stroke="none" />
                    <line x1={a[0]} y1={a[1]} x2={b[0]} y2={b[1]} markerEnd="url(#teal)" />
                </g>
            ))}
        </g>
        <circle cx="608" cy="282" r="2" fill="#555" />
        <path d="M608 283L523 436" stroke="#222c36" strokeWidth="1.400" strokeDasharray="1.500 1.500" markerEnd="url(#teal)" />
        <g stroke="#7fbdd0" fill="none">
            <path d="M518 383l5-9 64 33 4-12-4 12 60 34-4 11" />
            <path d="M626 458l11 2v56h11-11v59l-11 1" />
            <path d="M442 550l-3 10 52 29 3-4-3 6 57 29 6-8" />
        </g>
    </svg>
);

const CALLOUTS = [
    { dim: 'Region', box: 'top-[200px] left-[590px] w-[141px]' },
    { dim: 'Produit', box: 'top-[322px] left-[648px] w-[93px]' },
    { dim: 'Produit', box: 'top-[413px] left-[374px] w-[117px]', last: 'région' },
];

const Sheet = () => (
    <main className="flex min-h-0 flex-1 bg-[#e6e6e6]">
        <div className="relative min-w-0 flex-1 overflow-hidden border-r border-b border-[#bdbdbd] bg-white font-['Lato','Liberation_Sans',sans-serif] text-[10px] text-[#333]">
            <table className="w-full min-w-[1269px] table-fixed border-separate border-spacing-0 leading-[11px]">
                <colgroup>
                    <col className="w-5" />
                    {COLUMNS.map(([name, width]) => <col key={name} style={width ? { width } : undefined} />)}
                </colgroup>
                <thead>
                    <tr className="h-4 bg-[#e6e6e6] font-['Open_Sans',sans-serif] text-[9px] text-[#555]">
                        <th aria-label="Tout sélectionner" className="border-b border-[#bdbdbd] p-0">
                            <svg viewBox="0 0 9 9" className="ml-2 size-[9px]"><path d="M9 0v9H0z" fill="#b4b4b4" /></svg>
                        </th>
                        {COLUMNS.map(([name]) => (
                            <th
                                key={name}
                                scope="col"
                                className={`border-r border-b border-r-[#c3c3c3] p-0 font-normal ${name === 'B' ? 'border-b-2 border-b-[#217346] bg-[#d2d2d2] text-[#3c7a58]' : 'border-b-[#bdbdbd]'}`}
                            >
                                {name}
                            </th>
                        ))}
                    </tr>
                </thead>
                <tbody>
                    {ROWS.map((height, i) => {
                        const row = i + 1;
                        let skip = 0;
                        return (
                            <tr key={row} style={{ height }}>
                                <th scope="row" className="border-r border-b border-[#c3c3c3] bg-[#e6e6e6] p-0 align-bottom font-['Open_Sans',sans-serif] text-[9px] font-normal text-[#555]">
                                    {row}
                                </th>
                                {COLUMNS.map(([name]) => {
                                    if (skip > 0) {
                                        skip -= 1;
                                        return null;
                                    }
                                    const cell = CELLS[name + row];
                                    if (!cell) return <td key={name} className="p-0" />;
                                    if (cell.span) {
                                        skip = cell.span - 1;
                                        return (
                                            <td key={name} colSpan={cell.span} className={`p-0 whitespace-nowrap ${cell.cls}`}>
                                                <div className="flex justify-center">{cell.text}</div>
                                            </td>
                                        );
                                    }
                                    return (
                                        <td key={name} className={`relative py-0 whitespace-nowrap ${cell.cls}`}>
                                            {cell.text}
                                            {cell.corner && <span className="absolute right-0 bottom-0 size-1 bg-[#3a5fc0] [clip-path:polygon(100%_0,100%_100%,0_100%)]" />}
                                        </td>
                                    );
                                })}
                            </tr>
                        );
                    })}
                </tbody>
            </table>

            <Overlay />
            {CALLOUTS.map(({ dim, box, last = 'année' }) => (
                <div
                    key={box}
                    className={`absolute flex h-[22px] items-center justify-center border border-[#62b4c9] bg-linear-to-b from-[#dff7fe] to-[#9fe4f8] whitespace-pre text-[#222] shadow ${box}`}
                >
                    {dim} / <b>{last}</b>
                </div>
            ))}
            <p className="absolute top-[293px] right-[74px] text-center text-[33px] leading-[41px] text-[#30363d] [text-shadow:3px_4px_6px_rgba(0,0,0,.25)]">
                Cube 3D Excel
                <br />
                en action
            </p>
            <p className="absolute right-[38px] bottom-[19px] text-[13px] leading-4 [text-shadow:3px_4px_6px_rgba(0,0,0,.25)]">MichelB.</p>
        </div>
        <div className="flex w-[16px] flex-col items-center justify-between">
            <button aria-label="Défiler vers le haut" className="flex h-[13px] w-3 shrink-0 items-center justify-center bg-white text-[#666]">
                <Svg w={5} h={3}><path d="M0 3h5L2.500 0z" fill="currentColor" stroke="none" /></Svg>
            </button>
            <span className="mb-3.5 w-3 flex-1 border border-[#c8c8c8] bg-white" />
            <button aria-label="Défiler vers le bas" className="flex h-3 w-3 shrink-0 items-center justify-center bg-white text-[#666]">
                <Caret />
            </button>
        </div>
    </main>
);

const SheetTabs = () => (
    <div className="flex h-5 items-start bg-[#e6e6e6] text-[11px] text-[#666]">
        <span className="flex w-[68px] items-center gap-4 pt-[7px] pl-[18px] text-[#bbb]">
            <Svg w={4} h={7}><path d="M4 0v7L0 3.500z" fill="currentColor" stroke="none" /></Svg>
            <Svg w={4} h={7}><path d="M0 0v7l4-3.500z" fill="currentColor" stroke="none" /></Svg>
        </span>
        <button className="h-4 w-[63px] border-l border-[#bbb] leading-4">Couleurs</button>
        <button className="h-[18px] border-x border-b-2 border-x-[#bbb] border-b-[#217346] bg-white px-[6px] leading-4 font-bold text-[#217346]">
            Données pour Cube 3D
        </button>
        <button aria-label="Nouvelle feuille" className="ml-[21px] pt-[3px] text-[#777]">
            <Svg w={15} h={15}><circle cx="7.500" cy="7.500" r="6.500" /><path d="M7.500 4v7M4 7.500h7" /></Svg>
        </button>
        <div className="ml-auto flex w-[515px] items-center pt-1 pr-4 text-[#555]">
            <span className="flex w-3 flex-col items-start gap-0.5">
                <i className="size-0.5 bg-[#aaa]" />
                <i className="size-0.5 bg-[#aaa]" />
                <i className="size-0.5 bg-[#aaa]" />
            </span>
            <button aria-label="Défiler à gauche" className="flex h-3 w-3 items-center justify-center bg-white">
                <Svg w={3} h={5}><path d="M3 0v5L0 2.500z" fill="currentColor" stroke="none" /></Svg>
            </button>
            <span className="mr-4 h-3 flex-1 border border-[#c0c0c0] bg-white" />
            <button aria-label="Défiler à droite" className="flex h-3 w-3 items-center justify-center bg-white">
                <Svg w={3} h={5}><path d="M0 0v5l3-2.500z" fill="currentColor" stroke="none" /></Svg>
            </button>
        </div>
    </div>
);

const StatusBar = () => (
    <footer className="flex h-[18px] items-center border-t border-[#dcdcdc] bg-[#f3f2f1] pl-1 text-[9px] text-[#555]">
        <span className="w-[31px]">Prêt</span>
        <Svg w={10} h={10}><path d="M.5 3v6.500h9V1.500H5M2.500 5.500h5M2.500 7.500h5M5 3h4" /><circle cx="2" cy="2" r="1.500" fill="currentColor" /></Svg>
        <div className="ml-auto flex h-full items-center pr-1.5 text-[#777]">
            <button aria-label="Normal" className="flex h-full w-7 items-center justify-center bg-[#c8c6c4]">
                <Svg w={11} h={11}><path d="M.5 .5h10v10H.5zM.5 4h10M.5 7h10M4 .5v10M7 .5v10" strokeWidth=".9" /></Svg>
            </button>
            <button aria-label="Mise en page" className="flex h-full w-7 items-center justify-center">
                <Svg w={11} h={11}><path d="M.5 .5h10v10H.5zM3 2.500h5v6H3zM4 4.500h3M4 6.500h3" strokeWidth=".9" /></Svg>
            </button>
            <button aria-label="Sauts de page" className="flex h-full w-7 items-center justify-center">
                <Svg w={11} h={11}><path d="M.5 .5h10v10H.5zM3.500 .5v5h4v-5" strokeWidth=".9" /></Svg>
            </button>
            <button aria-label="Zoom arrière" className="flex w-3 justify-center"><Svg w={7} h={7}><path d="M0 3.500h7" strokeWidth="1.500" /></Svg></button>
            <input
                type="range"
                aria-label="Zoom"
                defaultValue={42}
                className="h-[9px] w-[82px] appearance-none bg-[linear-gradient(#a8a8a8,#a8a8a8)] bg-[length:100%_1px] bg-center bg-no-repeat [&::-webkit-slider-thumb]:h-[9px] [&::-webkit-slider-thumb]:w-1 [&::-webkit-slider-thumb]:appearance-none [&::-webkit-slider-thumb]:bg-[#666]"
            />
            <button aria-label="Zoom avant" className="flex w-3 justify-center"><Svg w={7} h={7}><path d="M0 3.500h7M3.500 0v7" strokeWidth="1.300" /></Svg></button>
            <span className="w-[26px] text-right whitespace-nowrap">85 %</span>
        </div>
    </footer>
);

export default function App() {
    return (
        <div className="flex h-screen flex-col bg-black py-[17px] font-['Open_Sans','Noto_Sans',sans-serif]">
            <TitleBar />
            <TabStrip />
            <Ribbon />
            <FormulaBar />
            <Sheet />
            <SheetTabs />
            <StatusBar />
        </div>
    );
}
